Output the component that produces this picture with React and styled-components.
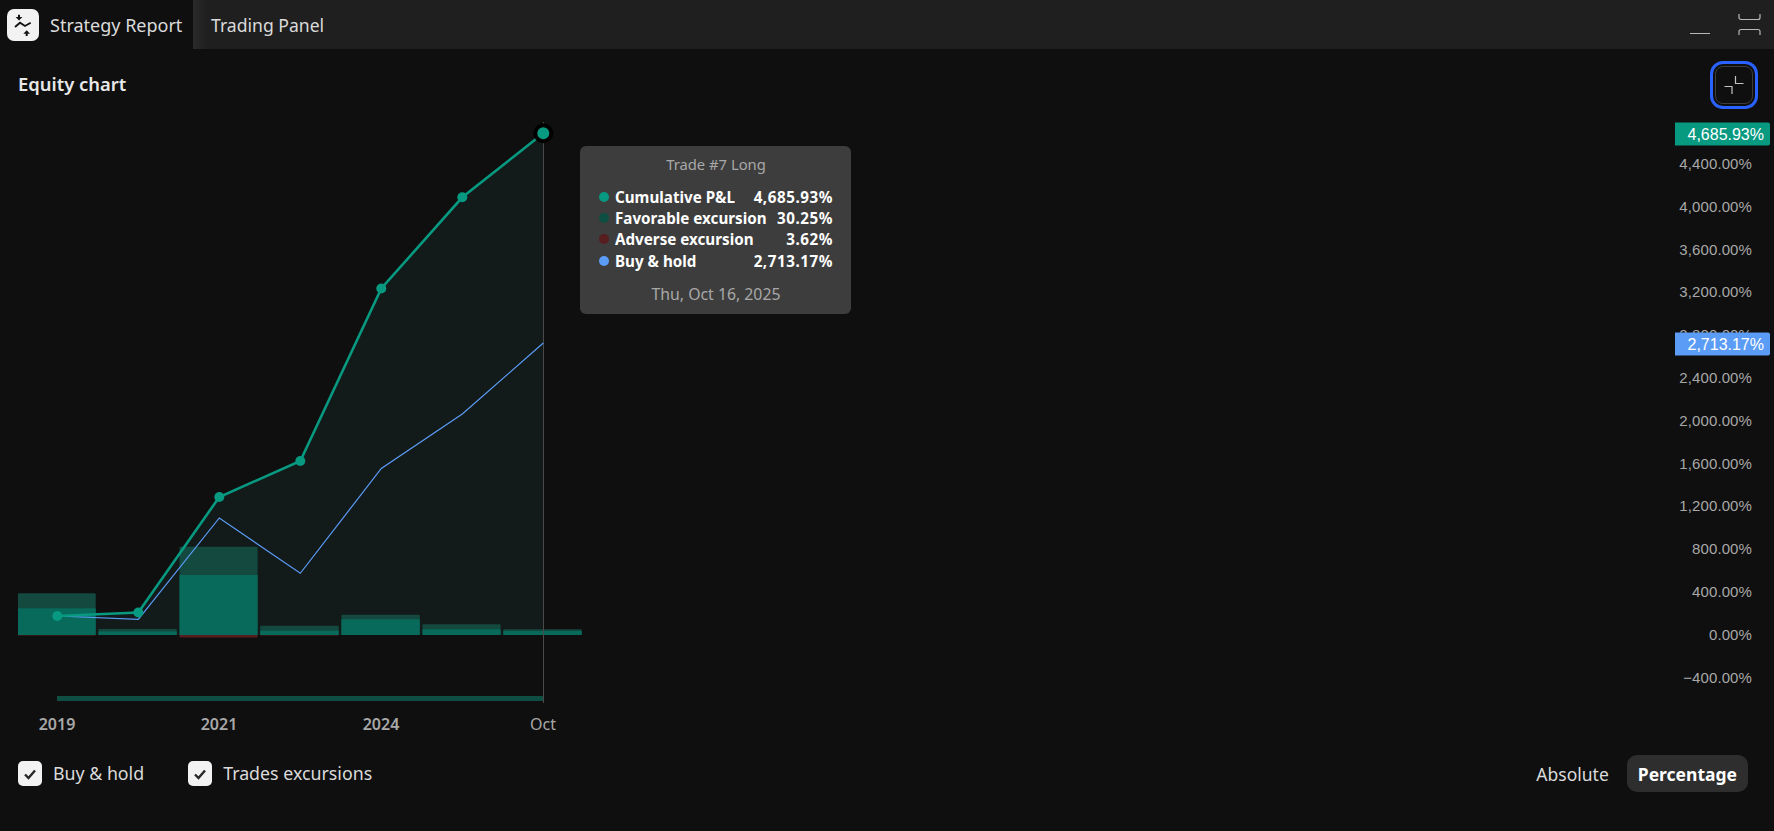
import React from "react";
import styled, { createGlobalStyle } from "styled-components";

const Global = createGlobalStyle`
  html, body { margin: 0; padding: 0; background: #0f0f0f; }
  body { font-family: "Noto Sans", "Liberation Sans", sans-serif; overflow: hidden; }
`;
const Page = styled.div`
  width: 1774px; height: 831px; display: flex; flex-direction: column; color: #dbdbdb;
`;
const Header = styled.header`
  height: 49px; flex: none; background: #1f1f1f; display: flex; align-items: stretch;
`;
const ActiveTab = styled.div`
  width: 193px; background: #0f0f0f; display: flex; align-items: center; gap: 11px; padding-left: 7px;
  box-sizing: border-box; font-size: 18px; color: #dbdbdb;
`;
const Tab = styled.div`
  display: flex; align-items: center; padding-left: 18px; font-size: 17.6px; color: #dbdbdb;
  flex: 1;
  background: linear-gradient(90deg, #2a2a2a 0, #1f1f1f 14px);
`;
const Logo = styled.div`
  width: 32px; height: 32px; background: #f2f2f2; border-radius: 7px; display: flex;
`;
const WindowButtons = styled.div`
  display: flex; align-items: center; padding-right: 13px; gap: 27px;
`;
const Body = styled.main`
  flex: 1; display: flex; flex-direction: column; min-height: 0;
`;
const TitleRow = styled.div`
  height: 72px; flex: none; box-sizing: border-box; padding: 12px 16px 0 18px; display: flex; justify-content: space-between; align-items: flex-start;
`;
const Title = styled.h2`
  margin: 11px 0 0; font-size: 18.4px; font-weight: 600; color: #e8e8e8; line-height: 24px;
`;
const FocusRing = styled.div`
  width: 48px; height: 48px; box-sizing: border-box; border: 3px solid #2962ff; border-radius: 13px; padding: 2px;
`;
const FocusInner = styled.div`
  width: 100%; height: 100%; box-sizing: border-box; border: 1px solid #3d3d3d; border-radius: 8px; display: flex; align-items: center; justify-content: center;
`;
const ChartArea = styled.section`
  position: relative; height: 625px; flex: none;
`;
const ChartSvg = styled.svg`
  display: block; width: 100%; height: 100%;
`;
const Tick = styled.span`
  position: absolute; right: 22px; transform: translateY(-50%);
  font: 15px/16px "Liberation Sans", Arial, sans-serif; letter-spacing: 0.1px; color: #a8a8a8;
`;
const PriceTag = styled.span`
  position: absolute; left: 1675px; width: 95px; height: 23px; box-sizing: border-box; padding-right: 6px;
  transform: translateY(-50%); background: ${p => p.$color}; border-radius: 0 2px 2px 0;
  font: 16px/23px "Liberation Sans", Arial, sans-serif; color: #fff; text-align: right;
`;
const AxisLabel = styled.span`
  position: absolute; top: 592px; transform: translateX(-50%);
  font-size: 16px; line-height: 22px; font-weight: ${p => (p.$major ? 600 : 400)}; color: #a8a8a8;
`;
const Tooltip = styled.div`
  position: absolute; left: 580px; top: 25px; width: 271px; height: 168px; box-sizing: border-box;
  background: #3d3d3d; border-radius: 6px; padding: 8px 18px 0 19px;
  display: flex; flex-direction: column;
`;
const TipTitle = styled.div`
  text-align: center; font-size: 14.8px; line-height: 20px; color: #a8a8a8;
`;
const TipRows = styled.div`
  margin-top: 12px; display: flex; flex-direction: column;
`;
const TipRow = styled.div`
  height: 21.3px; display: flex; align-items: center; font-size: 15.2px; font-weight: 700; color: #fff;
`;
const Dot = styled.i`
  width: 10px; height: 10px; border-radius: 50%; background: ${p => p.$color}; margin-right: 6px; flex: none;
`;
const TipValue = styled.span`
  margin-left: auto; letter-spacing: 0.55px;
`;
const TipDate = styled.div`
  margin-top: 13px; text-align: center; font-size: 15.8px; line-height: 20px; color: #a8a8a8;
`;
const Footer = styled.footer`
  flex: 1; display: flex; justify-content: space-between; align-items: flex-start; padding: 9px 26px 0 18px;
`;
const Checks = styled.div`
  display: flex; gap: 44px; padding-top: 6px;
`;
const CheckLabel = styled.label`
  display: flex; align-items: center; gap: 11px; font-size: 17.8px; color: #dbdbdb; line-height: 25px;
`;
const CheckBox = styled.span`
  width: 24px; height: 25px; background: #f2f2f2; border-radius: 5px; display: flex; align-items: center; justify-content: center;
`;
const Toggle = styled.div`
  display: flex; align-items: center; gap: 18px;
`;
const ToggleItem = styled.span`
  height: 37px; display: flex; align-items: center; font-size: 17.5px; border-radius: 10px;
  padding: ${p => (p.$on ? "0 11px" : "0")};
  font-weight: ${p => (p.$on ? 700 : 400)};
  color: ${p => (p.$on ? "#fff" : "#dbdbdb")};
  background: ${p => (p.$on ? "#2e2e2e" : "transparent")};
`;

const OFFSET_Y = 121; // svg top in page coordinates
const xs = [57.3, 138.3, 219.3, 300.3, 381.3, 462.3, 543.3];
const pnl = [616, 612.5, 497, 461, 288.5, 197.3, 133.3];
const hold = [616, 619.3, 518, 573.3, 468.5, 414, 343];
const bars = [
  [18, 95.7, 593.3, 608.3, 635.5],
  [98.4, 176.8, 629, 631.5, 635],
  [179.5, 257.6, 546.7, 575, 637.5],
  [260.2, 338.7, 625.7, 630.7, 635.5],
  [341.4, 419.8, 614.7, 619.3, 635],
  [422.5, 500.6, 624.3, 629.3, 635],
  [503.3, 581.7, 629.3, 631, 635],
];
const y = v => v - OFFSET_Y;
const line = (a) => xs.map((x, i) => `${x},${y(a[i])}`).join(" ");
const area = `${xs[0]},${y(635)} ${line(pnl)} ${xs[6]},${y(635)}`;
const ticks = ["4,400.00%", "4,000.00%", "3,600.00%", "3,200.00%", "2,800.00%", "2,400.00%", "2,000.00%", "1,600.00%", "1,200.00%", "800.00%", "400.00%", "0.00%", "−400.00%"];
const rows = [
  ["#089981", "Cumulative P&L", "4,685.93%"],
  ["#0f4f43", "Favorable excursion", "30.25%"],
  ["#571d1f", "Adverse excursion", "3.62%"],
  ["#5b9cf6", "Buy & hold", "2,713.17%"],
];

const Check = () => (
  <svg width="14" height="14" viewBox="0 0 14 14" fill="none" stroke="#262626" strokeWidth="2.4">
    <path d="M2 7.5 5.5 11 12 3.5" />
  </svg>
);

export default function App() {
  return (
    <Page>
      <Global />
      <Header>
        <ActiveTab>
          <Logo>
            <svg width="32" height="32" viewBox="0 0 32 32" fill="none">
              <path d="M12 5.7v3" stroke="#131313" strokeWidth="2" />
              <path d="M8.6 8h6.8L12 11.6z" fill="#131313" />
              <path d="M8 18l5-4.3 5 3.3 5.7-3.3" stroke="#131313" strokeWidth="1.9" />
              <path d="M19.7 27v-3" stroke="#131313" strokeWidth="2" />
              <path d="M16.3 24.8h6.8L19.7 21.2z" fill="#131313" />
            </svg>
          </Logo>
          Strategy Report
        </ActiveTab>
        <Tab>Trading Panel</Tab>
        <WindowButtons>
          <svg width="21" height="22" viewBox="0 0 21 22" fill="none" stroke="#b8b8b8"><path d="M0 19.5h20" /></svg>
          <svg width="23" height="24" viewBox="0 0 23 24" fill="none" stroke="#b8b8b8" strokeWidth="1.2">
            <path d="M1 1v3.5a2 2 0 0 0 2 2h17a2 2 0 0 0 2-2V1" />
            <path d="M1 22v-3.5a2 2 0 0 1 2-2h17a2 2 0 0 1 2 2V22" />
          </svg>
        </WindowButtons>
      </Header>
      <Body>
        <TitleRow>
          <Title>Equity chart</Title>
          <FocusRing>
            <FocusInner>
              <svg width="20" height="20" viewBox="0 0 20 20" fill="none" stroke="#c4c4c4" strokeWidth="1.2">
                <path d="M11.5 1v7.5H19.5" />
                <path d="M.5 11.5H8V19" />
              </svg>
            </FocusInner>
          </FocusRing>
        </TitleRow>
        <ChartArea>
          <ChartSvg viewBox="0 0 1774 625">
            <polygon points={area} fill="#121a1a" />
            {bars.map(([a, b, fav, p, adv], i) => (
              <g key={i}>
                <rect x={a} y={y(fav)} width={b - a} height={635 - fav} fill="#14493f" rx="1" />
                <rect x={a} y={y(p)} width={b - a} height={635 - p} fill="#076a5a" />
                <rect x={a} y={y(635)} width={b - a} height={adv - 635} fill="#571d1f" />
              </g>
            ))}
            <rect x="57" y={y(696)} width="486" height="5" fill="#0f4f43" />
            <line x1="543.5" x2="543.5" y1={y(122)} y2={y(703)} stroke="#4a4a4a" />
            <polyline points={line(hold)} fill="none" stroke="#5b9cf6" strokeWidth="1.2" />
            <polyline points={line(pnl)} fill="none" stroke="#089981" strokeWidth="2.6" />
            {xs.slice(0, 6).map((x, i) => (
              <circle key={i} cx={x} cy={y(pnl[i])} r="5" fill="#089981" />
            ))}
            <circle cx={xs[6]} cy={y(pnl[6])} r="8" fill="#089981" stroke="#000" strokeWidth="4" />
          </ChartSvg>
          {ticks.map((t, i) => (
            <Tick key={t} style={{ top: 164 + i * 42.8 - OFFSET_Y }}>{t}</Tick>
          ))}
          <PriceTag $color="#089981" style={{ top: 133.5 - OFFSET_Y }}>4,685.93%</PriceTag>
          <PriceTag $color="#5b9cf6" style={{ top: 344 - OFFSET_Y }}>2,713.17%</PriceTag>
          <AxisLabel $major style={{ left: 57 }}>2019</AxisLabel>
          <AxisLabel $major style={{ left: 219 }}>2021</AxisLabel>
          <AxisLabel $major style={{ left: 381 }}>2024</AxisLabel>
          <AxisLabel style={{ left: 543 }}>Oct</AxisLabel>
          <Tooltip>
            <TipTitle>Trade #7 Long</TipTitle>
            <TipRows>
              {rows.map(([c, l, v]) => (
                <TipRow key={l}><Dot $color={c} />{l}<TipValue>{v}</TipValue></TipRow>
              ))}
            </TipRows>
            <TipDate>Thu, Oct 16, 2025</TipDate>
          </Tooltip>
        </ChartArea>
        <Footer>
          <Checks>
            <CheckLabel><CheckBox><Check /></CheckBox>Buy &amp; hold</CheckLabel>
            <CheckLabel><CheckBox><Check /></CheckBox>Trades excursions</CheckLabel>
          </Checks>
          <Toggle>
            <ToggleItem>Absolute</ToggleItem>
            <ToggleItem $on>Percentage</ToggleItem>
          </Toggle>
        </Footer>
      </Body>
    </Page>
  );
}
